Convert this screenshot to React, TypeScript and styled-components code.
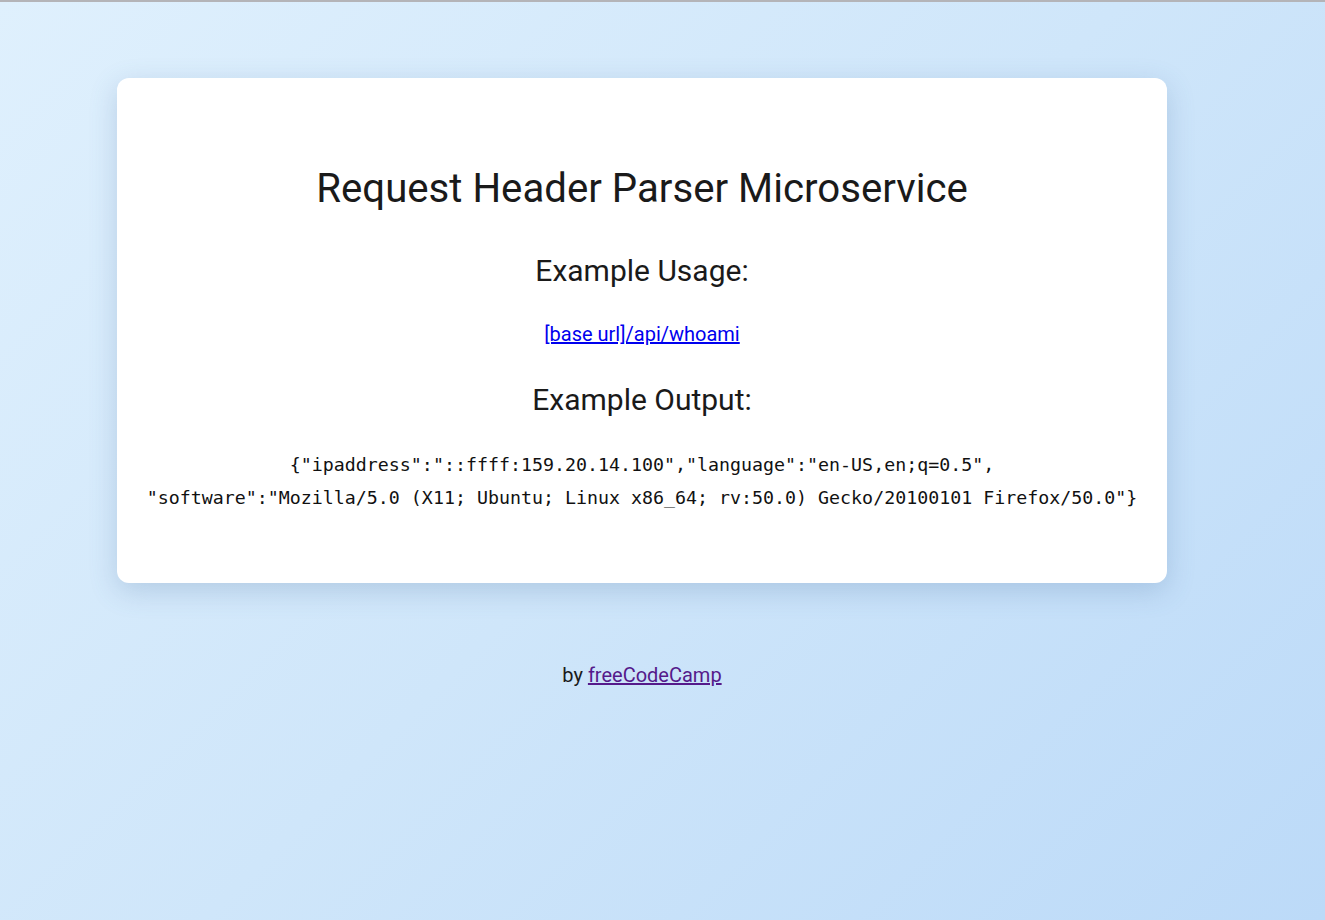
import React from "react";
import styled, { createGlobalStyle } from "styled-components";

const Global = createGlobalStyle`
  html, body { margin: 0; padding: 0; }
  body {
    min-height: 920px;
    font-family: Roboto, "Noto Sans", sans-serif;
    color: #1a1a1a;
    background: linear-gradient(135deg, #dff0fd 0%, #cfe6fa 50%, #bcdaf8 100%);
    border-top: 2px solid #b4b4b8;
    box-sizing: border-box;
  }
`;

const Page = styled.div`
  display: flex;
  flex-direction: column;
  align-items: flex-start;
  padding: 76px 0 0 117px;
`;

const Card = styled.main`
  width: 1050px;
  box-sizing: border-box;
  background: #fff;
  border-radius: 12px;
  box-shadow: 0 8px 28px rgba(70, 110, 160, 0.24);
  padding: 86px 20px 69px;
  text-align: center;
`;

const Title = styled.h1`
  margin: 0 0 40px;
  font-size: 40.2px;
  font-weight: 400;
  line-height: 49px;
`;

const Heading = styled.h2<{ $gap: number }>`
  margin: 0 0 ${(p) => p.$gap}px;
  font-size: 30px;
  font-weight: 400;
  line-height: 36px;
`;

const Para = styled.p`
  margin: 0 0 36px;
  font-size: 20px;
  line-height: 24px;
`;

const Link = styled.a<{ $visited?: boolean }>`
  color: ${(p) => (p.$visited ? "#551a8b" : "#0000ee")};
  text-decoration: underline;
`;

const Code = styled.code`
  display: block;
  font-family: "DejaVu Sans Mono", monospace;
  font-size: 18.3px;
  line-height: 33px;
  color: #111;
`;

const Footer = styled.p`
  width: 1050px;
  margin: 80px 0 0;
  font-size: 20px;
  line-height: 24px;
  text-align: center;
`;

export default function App() {
  return (
    <>
      <Global />
      <Page>
        <Card>
          <Title>Request Header Parser Microservice</Title>
          <Heading $gap={33}>Example Usage:</Heading>
          <Para>
            <Link href="#">[base url]/api/whoami</Link>
          </Para>
          <Heading $gap={30}>Example Output:</Heading>
          <Code>
            {'{"ipaddress":"::ffff:159.20.14.100","language":"en-US,en;q=0.5",'}
            <br />
            {'"software":"Mozilla/5.0 (X11; Ubuntu; Linux x86_64; rv:50.0) Gecko/20100101 Firefox/50.0"}'}
          </Code>
        </Card>
        <Footer>
          by <Link href="#" $visited>freeCodeCamp</Link>
        </Footer>
      </Page>
    </>
  );
}
